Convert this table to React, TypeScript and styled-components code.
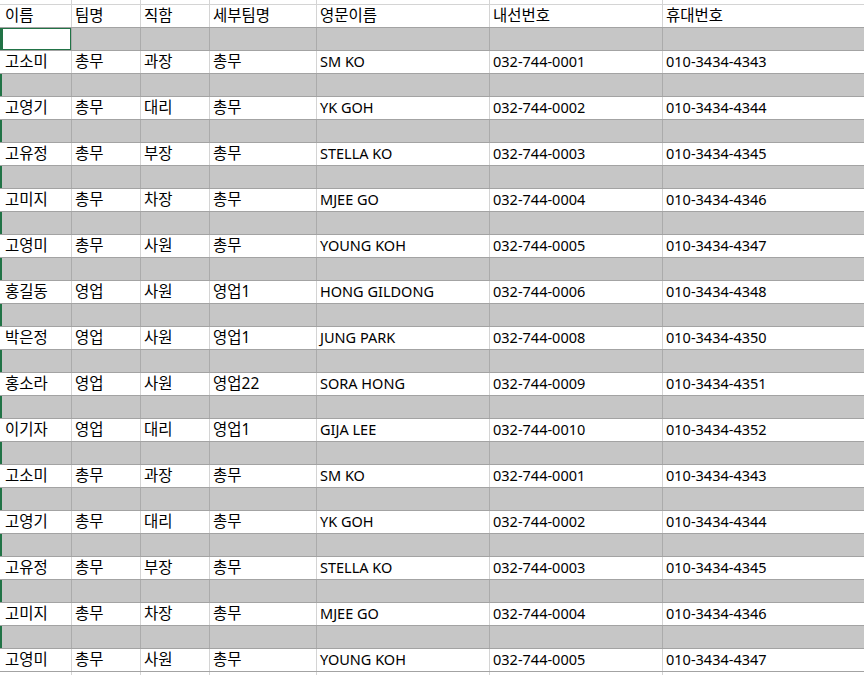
import React from "react";
import styled, { createGlobalStyle, css } from "styled-components";

const Global = createGlobalStyle`
  html, body { margin: 0; padding: 0; background: #fff; overflow: hidden; }
  body { font-family: "Noto Sans", "Noto Sans CJK KR", sans-serif; }
`;

const COLS = "72px 69px 69px 107px 173px 173px 1fr";

const Sheet = styled.div`
  width: 864px;
  height: 675px;
  overflow: hidden;
  display: flex;
  flex-direction: column;
`;

const Row = styled.div<{ $kind: "top" | "head" | "data" | "band" }>`
  display: grid;
  grid-template-columns: ${COLS};
  flex: none;
  box-sizing: border-box;
  height: ${(p) => (p.$kind === "top" ? 5 : 23)}px;
  border-bottom: 1px solid ${(p) => (p.$kind === "top" ? "#d4d4d4" : "#a3a3a3")};
  background: ${(p) => (p.$kind === "band" ? "#c6c6c6" : "#fff")};
`;

const Cell = styled.div<{ $band?: boolean; $first?: boolean; $last?: boolean; $ko?: boolean }>`
  box-sizing: border-box;
  position: relative;
  border-right: ${(p) => (p.$last ? "none" : `1px solid ${p.$band ? "#ababab" : "#d4d4d4"}`)};
  padding-left: ${(p) => (p.$first ? 5 : 3)}px;
  font-size: ${(p) => (p.$ko ? 15.5 : 14.5)}px;
  line-height: 20px;
  color: #000;
  white-space: nowrap;
  overflow: hidden;
  ${(p) =>
    p.$band && p.$first &&
    css`
      box-shadow: inset 2px 0 0 #217346;
    `}
`;

const Selection = styled.div`
  position: absolute;
  left: 2px;
  top: 0;
  right: 0;
  bottom: 0;
  background: #fff;
  border: 1px solid #217346;
`;

const header = ["이름", "팀명", "직함", "세부팀명", "영문이름", "내선번호", "휴대번호"];

const people: string[][] = [
  ["고소미", "총무", "과장", "총무", "SM KO", "032-744-0001", "010-3434-4343"],
  ["고영기", "총무", "대리", "총무", "YK GOH", "032-744-0002", "010-3434-4344"],
  ["고유정", "총무", "부장", "총무", "STELLA KO", "032-744-0003", "010-3434-4345"],
  ["고미지", "총무", "차장", "총무", "MJEE GO", "032-744-0004", "010-3434-4346"],
  ["고영미", "총무", "사원", "총무", "YOUNG KOH", "032-744-0005", "010-3434-4347"],
  ["홍길동", "영업", "사원", "영업1", "HONG GILDONG", "032-744-0006", "010-3434-4348"],
  ["박은정", "영업", "사원", "영업1", "JUNG PARK", "032-744-0008", "010-3434-4350"],
  ["홍소라", "영업", "사원", "영업22", "SORA HONG", "032-744-0009", "010-3434-4351"],
  ["이기자", "영업", "대리", "영업1", "GIJA LEE", "032-744-0010", "010-3434-4352"],
  ["고소미", "총무", "과장", "총무", "SM KO", "032-744-0001", "010-3434-4343"],
  ["고영기", "총무", "대리", "총무", "YK GOH", "032-744-0002", "010-3434-4344"],
  ["고유정", "총무", "부장", "총무", "STELLA KO", "032-744-0003", "010-3434-4345"],
  ["고미지", "총무", "차장", "총무", "MJEE GO", "032-744-0004", "010-3434-4346"],
  ["고영미", "총무", "사원", "총무", "YOUNG KOH", "032-744-0005", "010-3434-4347"],
];

const hasHangul = (s: string) => /[가-힣]/.test(s);

const TextRow = ({ values, kind }: { values: string[]; kind: "head" | "data" | "top" }) => (
  <Row $kind={kind}>
    {values.map((v, i) => (
      <Cell key={i} $first={i === 0} $last={i === values.length - 1} $ko={hasHangul(v)}>
        {v}
      </Cell>
    ))}
  </Row>
);

const BandRow = ({ selected }: { selected?: boolean }) => (
  <Row $kind="band">
    {header.map((_, i) => (
      <Cell key={i} $band $first={i === 0} $last={i === header.length - 1}>
        {selected && i === 0 ? <Selection /> : null}
      </Cell>
    ))}
  </Row>
);

export default function App() {
  return (
    <Sheet>
      <Global />
      <TextRow kind="top" values={header.map(() => "")} />
      <TextRow kind="head" values={header} />
      {people.map((p, i) => (
        <React.Fragment key={i}>
          <BandRow selected={i === 0} />
          <TextRow kind="data" values={p} />
        </React.Fragment>
      ))}
      <TextRow kind="data" values={header.map(() => "")} />
    </Sheet>
  );
}
